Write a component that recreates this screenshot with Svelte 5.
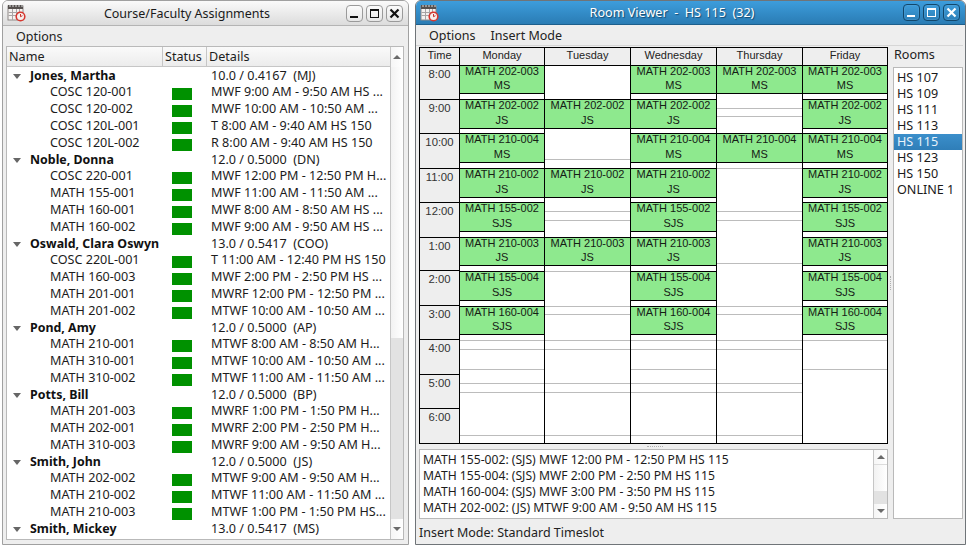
<script>
  const groups = [
    { name: 'Jones, Martha', info: '10.0 / 0.4167  (MJ)', items: [
      ['COSC 120-001', 'MWF 9:00 AM - 9:50 AM HS ...'],
      ['COSC 120-002', 'MWF 10:00 AM - 10:50 AM ...'],
      ['COSC 120L-001', 'T 8:00 AM - 9:40 AM HS 150'],
      ['COSC 120L-002', 'R 8:00 AM - 9:40 AM HS 150'] ] },
    { name: 'Noble, Donna', info: '12.0 / 0.5000  (DN)', items: [
      ['COSC 220-001', 'MWF 12:00 PM - 12:50 PM H...'],
      ['MATH 155-001', 'MWF 11:00 AM - 11:50 AM ...'],
      ['MATH 160-001', 'MWF 8:00 AM - 8:50 AM HS ...'],
      ['MATH 160-002', 'MWF 9:00 AM - 9:50 AM HS ...'] ] },
    { name: 'Oswald, Clara Oswyn', info: '13.0 / 0.5417  (COO)', items: [
      ['COSC 220L-001', 'T 11:00 AM - 12:40 PM HS 150'],
      ['MATH 160-003', 'MWF 2:00 PM - 2:50 PM HS ...'],
      ['MATH 201-001', 'MWRF 12:00 PM - 12:50 PM ...'],
      ['MATH 201-002', 'MTWF 10:00 AM - 10:50 AM ...'] ] },
    { name: 'Pond, Amy', info: '12.0 / 0.5000  (AP)', items: [
      ['MATH 210-001', 'MTWF 8:00 AM - 8:50 AM H...'],
      ['MATH 310-001', 'MTWF 10:00 AM - 10:50 AM ...'],
      ['MATH 310-002', 'MTWF 11:00 AM - 11:50 AM ...'] ] },
    { name: 'Potts, Bill', info: '12.0 / 0.5000  (BP)', items: [
      ['MATH 201-003', 'MWRF 1:00 PM - 1:50 PM H...'],
      ['MATH 202-001', 'MWRF 2:00 PM - 2:50 PM H...'],
      ['MATH 310-003', 'MWRF 9:00 AM - 9:50 AM H...'] ] },
    { name: 'Smith, John', info: '12.0 / 0.5000  (JS)', items: [
      ['MATH 202-002', 'MTWF 9:00 AM - 9:50 AM H...'],
      ['MATH 210-002', 'MTWF 11:00 AM - 11:50 AM ...'],
      ['MATH 210-003', 'MTWF 1:00 PM - 1:50 PM HS...'] ] },
    { name: 'Smith, Mickey', info: '13.0 / 0.5417  (MS)', items: [] }
  ];

  const ys = [65, 99, 133, 168, 202, 237, 271, 306, 340, 375, 409, 443];
  const hours = ['8:00', '9:00', '10:00', '11:00', '12:00', '1:00', '2:00', '3:00', '4:00', '5:00', '6:00'];
  const heights = [29, 30, 30, 30, 30, 29, 30, 29];
  const e = (h, code, who) => ({ h, code, who });
  const mon = [e(0,'MATH 202-003','MS'), e(1,'MATH 202-002','JS'), e(2,'MATH 210-004','MS'), e(3,'MATH 210-002','JS'), e(4,'MATH 155-002','SJS'), e(5,'MATH 210-003','JS'), e(6,'MATH 155-004','SJS'), e(7,'MATH 160-004','SJS')];
  const days = [
    { name: 'Monday', width: 85, events: mon, lines: [340,349,369,383,392,435] },
    { name: 'Tuesday', width: 86, events: [mon[1], mon[3], mon[5]], lines: [159,211,220,271,306,314,340,349,383,392,435] },
    { name: 'Wednesday', width: 86, events: mon, lines: [340,349,369,383,392,435] },
    { name: 'Thursday', width: 86, events: [mon[0], mon[2]], lines: [108,116,168,211,220,263,306,314,340,349,383,392,435] },
    { name: 'Friday', width: 85, events: mon, lines: [340,369] }
  ];
  const rooms = ['HS 107','HS 109','HS 111','HS 113','HS 115','HS 123','HS 150','ONLINE 1'];
  const log = [
    'MATH 155-002: (SJS) MWF 12:00 PM - 12:50 PM HS 115',
    'MATH 155-004: (SJS) MWF 2:00 PM - 2:50 PM HS 115',
    'MATH 160-004: (SJS) MWF 3:00 PM - 3:50 PM HS 115',
    'MATH 202-002: (JS) MTWF 9:00 AM - 9:50 AM HS 115',
    'MATH 202-003: (MS) MWRF 8:00 AM - 8:50 AM HS 115'
  ];
</script>

{#snippet appIcon()}
  <svg class="appicon" width="19" height="18" viewBox="0 0 19 18">
    <rect x="1" y="2" width="15" height="14" fill="#f4f2f0" stroke="#8f8a88"/>
    <rect x="1" y="1" width="15" height="4" fill="#55504e"/>
    <path d="M3 1v2M6 1v2M9 1v2M12 1v2M15 1v2" stroke="#ddd" stroke-width="1"/>
    <path d="M1.500 8.500h14M1.500 11.500h14M5.500 5v11M9.500 5v11M12.500 5v11" stroke="#a8a4a4" stroke-width="1"/>
    <circle cx="13.500" cy="12.500" r="4.300" fill="#f6f0ee" stroke="#d8372f" stroke-width="1.600"/>
    <path d="M13.500 10v2.700l2-1" fill="none" stroke="#c8302a" stroke-width="1"/>
  </svg>
{/snippet}

{#snippet winButtons()}
  <div class="btns">
    <span class="btn"><svg width="17" height="17" viewBox="0 0 17 17"><rect x="4" y="11" width="8" height="2" fill="currentColor"/></svg></span>
    <span class="btn"><svg width="17" height="17" viewBox="0 0 17 17"><rect x="4.500" y="4.500" width="8" height="8" fill="none" stroke="currentColor" stroke-width="1"/><rect x="4" y="4" width="9" height="2" fill="currentColor"/></svg></span>
    <span class="btn"><svg width="17" height="17" viewBox="0 0 17 17"><path d="M4.500 4.500l8 8M12.500 4.500l-8 8" stroke="currentColor" stroke-width="2.200" fill="none"/></svg></span>
  </div>
{/snippet}

<div class="desk">
  <section class="win left">
    <header class="title">
      {@render appIcon()}
      <span class="title-text">Course/Faculty Assignments</span>
      {@render winButtons()}
    </header>
    <nav class="menu"><span>Options</span></nav>
    <div class="table">
      <div class="table-main">
        <div class="thead">
          <span class="h-name">Name</span>
          <span class="h-status">Status</span>
          <span class="h-details">Details</span>
        </div>
        {#each groups as g}
          <div class="row parent">
            <span class="name"><i class="tri"></i><b>{g.name}</b></span>
            <span class="status"></span>
            <span class="details">{g.info}</span>
          </div>
          {#each g.items as it}
            <div class="row child">
              <span class="name">{it[0]}</span>
              <span class="status"><i class="chip"></i></span>
              <span class="details">{it[1]}</span>
            </div>
          {/each}
        {/each}
      </div>
      <div class="sbar big">
        <div class="arrow up"><i></i></div>
        <div class="track"></div>
        <div class="thumb"></div>
        <div class="arrow down"><i></i></div>
      </div>
    </div>
  </section>

  <section class="win right">
    <header class="title blue">
      {@render appIcon()}
      <span class="title-text">Room Viewer  -  HS 115  (32)</span>
      {@render winButtons()}
    </header>
    <nav class="menu rmenu"><span>Options</span><span>Insert Mode</span></nav>
    <div class="body">
      <div class="col-main">
        <div class="cal">
          <div class="col time">
            <div class="head">Time</div>
            {#each hours as h, i}
              <div class="hour" style="height:{ys[i + 1] - ys[i]}px">{h}</div>
            {/each}
          </div>
          {#each days as d}
            <div class="col" style="width:{d.width}px">
              <div class="head">{d.name}</div>
              <div class="canvas">
                {#each d.lines as y}
                  <i class="gl" style="top:{y - 66}px"></i>
                {/each}
                {#each d.events as ev}
                  <div class="ev" class:short={heights[ev.h] === 29} style="top:{ys[ev.h] - 66}px;height:{heights[ev.h]}px">
                    <span>{ev.code}</span><span>{ev.who}</span>
                  </div>
                {/each}
              </div>
            </div>
          {/each}
        </div>
        <div class="hsplit"><i></i></div>
        <div class="logbox">
          <div class="logtext">
            {#each log as l}<div class="logline">{l}</div>{/each}
          </div>
          <div class="sbar small">
            <div class="arrow up"><i></i></div>
            <div class="track"></div>
            <div class="thumb"></div>
            <div class="arrow down"><i></i></div>
          </div>
        </div>
      </div>
      <div class="vsplit"><i></i></div>
      <aside class="rooms">
        <div class="rooms-label">Rooms</div>
        <div class="rooms-list">
          {#each rooms as r}
            <div class="room" class:sel={r === 'HS 115'}>{r}</div>
          {/each}
        </div>
      </aside>
    </div>
    <footer class="status-line">Insert Mode: Standard Timeslot</footer>
  </section>
</div>

<style>
  :global(body) { margin: 0; background: #fff; }
  .desk {
    width: 969px; height: 546px; display: flex; overflow: hidden;
    font-family: "Noto Sans", sans-serif; font-size: 12.6px; color: #1c1c1c;
    box-sizing: border-box; padding: 0 3px 1px 2px; gap: 6px; background: #fff;
  }
  .win {
    box-sizing: border-box; display: flex; flex-direction: column;
    background: #eeeeee; border: 1px solid #8c8c8c; border-radius: 6px 6px 0 0; overflow: hidden;
  }
  .left { width: 407px; border-color: #a0a0a0; }
  .right { width: 551px; border-color: #6f7478; }
  .title {
    height: 25px; flex: none; display: flex; align-items: center; box-sizing: border-box;
    background: linear-gradient(#fafafa, #dcdcdc); border-bottom: 1px solid #b4b4b4;
    color: #1a1a1a;
  }
  .blue { background: linear-gradient(#3d9ddc, #2a7cb4); border-bottom: 1px solid #1d5f8c; color: #fff; height: 24px; }
  .appicon { margin-left: 4px; flex: none; }
  .title-text { flex: 1; text-align: center; white-space: pre; font-size: 12.5px; padding-left: 2px; }
  .blue .title-text { text-shadow: 1px 1px 1px #16496e; font-size: 12.6px; }
  .btns { display: flex; gap: 3px; margin-right: 5px; flex: none; }
  .btn {
    width: 17px; height: 17px; box-sizing: border-box; border: 1px solid #9a9a9a; border-radius: 4px;
    background: linear-gradient(#fbfbfb, #e6e6e6); color: #111; display: flex; align-items: center; justify-content: center;
  }
  .btn svg { flex: none; }
  .blue .btn { border-color: #12476b; background: linear-gradient(#3e9cd9, #2b7fb8); color: #fff; box-shadow: inset 0 0 0 1px #5aa9dd55; }
  .menu { height: 20px; box-sizing: border-box; flex: none; display: flex; align-items: center; padding: 0 0 0 13px; gap: 15px; color: #222; font-size: 12.5px; }
  .rmenu { height: 21px; padding-left: 13px; margin-right: 2px; border-bottom: 1px solid #d6d6d6; }

  .table {
    flex: 1; min-height: 0; margin: 0 4px 4px 3px; display: flex; box-sizing: border-box;
    border: 1px solid #b9b9b9; background: #fff; overflow: hidden;
  }
  .table-main { flex: 1; min-width: 0; overflow: hidden; }
  .thead {
    height: 20px; display: grid; grid-template-columns: 156px 44px 1fr; align-items: center;
    background: linear-gradient(#fafafa, #ececec); border-bottom: 1px solid #c6c6c6; box-sizing: border-box;
  }
  .thead span { height: 100%; display: flex; align-items: center; padding-left: 2px; box-sizing: border-box; border-right: 1px solid #c6c6c6; }
  .thead .h-details { border-right: none; padding-left: 2px; }
  .row { display: grid; grid-template-columns: 156px 44px 1fr; align-items: center; white-space: pre; }
  .parent { height: 16px; }
  .child { height: 17px; }
  .name { display: flex; align-items: center; }
  .parent .name { padding-left: 6px; }
  .child .name { padding-left: 43px; padding-bottom: 2px; }
  .child .details { padding-bottom: 2px; }
  .tri { width: 0; height: 0; border: 4px solid transparent; border-top: 5px solid #666; border-bottom: 0; margin-right: 9px; margin-top: 1px; }
  .parent b { font-weight: 700; color: #111; font-size: 12.4px; }
  .status { display: flex; justify-content: flex-start; }
  .chip { width: 20px; height: 12px; background: #009100; display: block; margin-top: 2px; margin-left: 9px; }
  .details { padding-left: 4px; overflow: hidden; }

  .sbar { flex: none; width: 13px; display: flex; flex-direction: column; box-sizing: border-box; border-left: 1px solid #c6c6c6; background: #fff; }
  .arrow { flex: none; display: flex; align-items: center; justify-content: center; background: linear-gradient(90deg, #f6f6f6, #fff); }
  .arrow i { width: 0; height: 0; border: 4px solid transparent; display: block; }
  .arrow.up i { border-bottom: 4px solid #6a6a6a; border-top: 0; }
  .arrow.down i { border-top: 4px solid #6a6a6a; border-bottom: 0; }
  .track { background: linear-gradient(90deg, #f2f2f2, #ffffff); }
  .thumb { background: #e2e2e2; }
  .big .arrow { height: 20px; }
  .big .track { height: 271px; }
  .big .thumb { flex: 1; }
  .small { width: 14px; }
  .small .arrow { height: 14px; }
  .small .track { height: 27px; border-top: 1px solid #dcdcdc; box-sizing: border-box; }
  .small .thumb { flex: 1; }

  .body { flex: 1; min-height: 0; display: flex; padding: 1px 3px 0 3px; }
  .col-main { width: 469px; flex: none; display: flex; flex-direction: column; }
  .cal {
    display: flex; height: 397px; box-sizing: border-box; background: #fff;
    border: 1px solid #000; border-right: none; flex: none;
    font-family: "Liberation Sans", sans-serif; font-size: 11px;
  }
  .col { box-sizing: border-box; border-right: 1px solid #000; display: flex; flex-direction: column; }
  .col.time { width: 40px; background: #eeeeee; }
  .head { height: 18px; flex: none; box-sizing: border-box; border-bottom: 1px solid #000; background: #eeeeee; text-align: center; line-height: 15px; color: #222; }
  .hour { box-sizing: border-box; border-bottom: 1px solid #000; text-align: center; padding-top: 2px; line-height: 13px; font-size: 11.3px; color: #333; }
  .hour:last-child { border-bottom: none; }
  .canvas { position: relative; flex: 1; background: #fff; }
  .gl { position: absolute; left: 0; right: 0; height: 1px; background: #bcbcbc; }
  .ev {
    position: absolute; left: 0; right: 0; box-sizing: border-box; background: #8ee98e;
    border-top: 1px solid #000; border-bottom: 1px solid #000; display: flex; flex-direction: column;
    align-items: center; line-height: 15px; color: #152015; font-size: 11px;
  }
  .ev.short { line-height: 14px; }
  .ev span { display: block; }
  .ev span:first-child { margin-top: -2px; }

  .hsplit { height: 5px; flex: none; display: flex; align-items: center; justify-content: center; }
  .hsplit i { width: 16px; height: 0; border-top: 1px dotted #b0b0b0; margin-left: 2px; }
  .logbox { flex: 1; min-height: 0; display: flex; border: 1px solid #b9b9b9; background: #fff; box-sizing: border-box; font-size: 12.15px; }
  .logtext { flex: 1; overflow: hidden; padding: 2px 0 0 3px; }
  .logline { height: 16px; line-height: 16px; white-space: pre; color: #1c1c1c; }
  .vsplit { width: 5px; flex: none; display: flex; align-items: center; justify-content: center; }
  .vsplit i { width: 0; height: 14px; border-left: 1px dotted #b0b0b0; }
  .rooms { width: 70px; flex: none; display: flex; flex-direction: column; }
  .rooms-label { height: 20px; line-height: 15px; padding: 0 0 0 1px; color: #222; }
  .rooms-list { flex: 1; background: #fff; border: 1px solid #b9b9b9; padding-top: 2px; }
  .room { height: 16px; line-height: 16px; padding-left: 3px; color: #1a1a1a; }
  .room.sel { background: linear-gradient(#3b8fcb, #2f7eb8); color: #e8f2fa; }
  .status-line { height: 25px; flex: none; padding-left: 3px; line-height: 28px; color: #222; font-size: 12.5px; }
</style>
